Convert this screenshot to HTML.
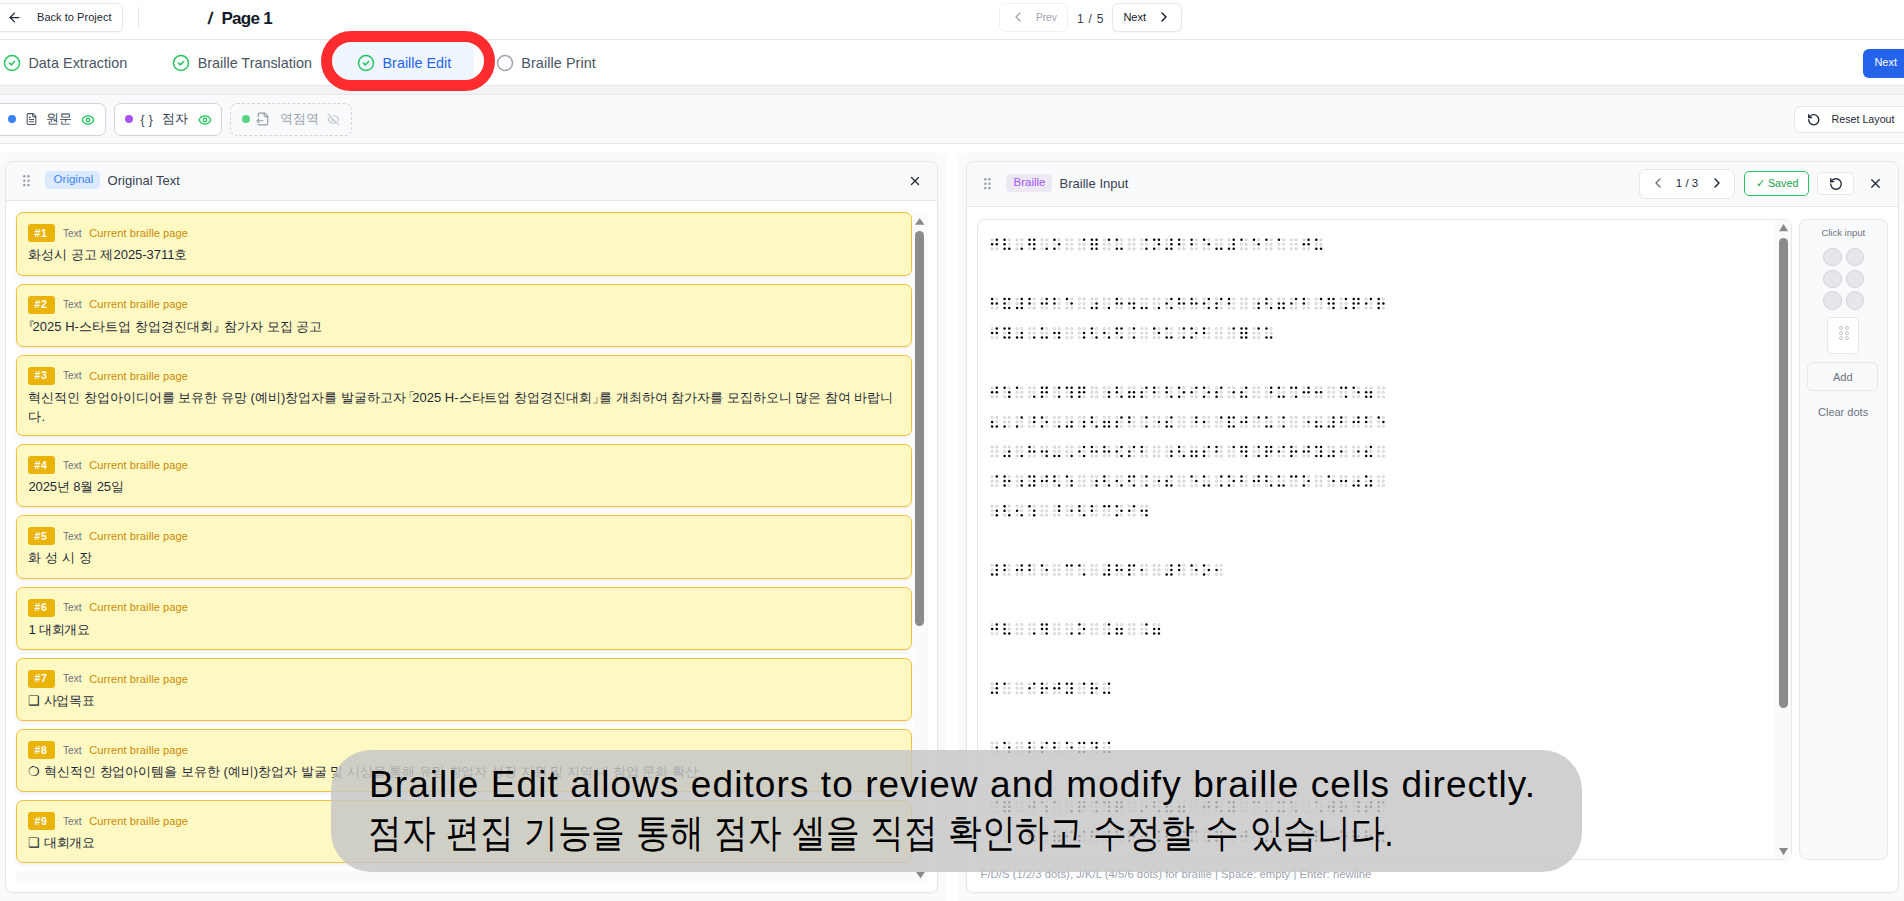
<!DOCTYPE html>
<html><head><meta charset="utf-8"><style>
html,body{margin:0;padding:0;width:1904px;height:901px;overflow:hidden;background:#fff;font-family:"Liberation Sans", sans-serif;}
.a{position:absolute;}
.t{position:absolute;white-space:nowrap;line-height:1;}
svg.a{overflow:visible}
</style></head><body>
<div class="a" style="left:0px;top:0px;width:1904px;height:39px;background:#fff"></div><div class="a" style="left:0px;top:39px;width:1904px;height:1px;background:#e5e7eb"></div><div class="a" style="left:-8px;top:3px;width:131px;height:29px;background:#fff;border:1px solid #e5e7eb;border-radius:6px;box-sizing:border-box;box-shadow:0 1px 2px rgba(0,0,0,0.05)"></div><svg class="a" style="left:6.8px;top:9.6px;" width="15" height="15" viewBox="0 0 24 24" fill="none" stroke-linecap="round" stroke-linejoin="round" stroke="#1f2937" stroke-width="2"><path d="m12 19-7-7 7-7"/><path d="M19 12H5"/></svg><div class="t" style="left:37px;top:11.79px;font-size:11px;color:#1f2937;font-weight:400;letter-spacing:0.041px;">Back to Project</div><div class="a" style="left:138px;top:7px;width:1px;height:21px;background:#e5e7eb"></div><div class="t" style="left:207.8px;top:10.21px;font-size:17px;color:#111827;font-weight:700;transform:skewX(-8deg)">/</div><div class="t" style="left:221.5px;top:10.21px;font-size:17px;color:#111827;font-weight:700;letter-spacing:-0.719px;">Page 1</div><div class="a" style="left:999px;top:3px;width:69px;height:29px;background:#fff;border:1px solid #e5e7eb;border-radius:6px;box-sizing:border-box;opacity:.55"></div><svg class="a" style="left:1010px;top:9.3px;" width="16" height="16" viewBox="0 0 24 24" fill="none" stroke-linecap="round" stroke-linejoin="round" stroke="#9ca3af" stroke-width="1.9"><path d="m15 18-6-6 6-6"/></svg><div class="t" style="left:1036px;top:12.97px;font-size:10.2px;color:#9ca3af;font-weight:400;letter-spacing:-0.063px;">Prev</div><div class="t" style="left:1077px;top:13.24px;font-size:12px;color:#374151;font-weight:400;word-spacing:1.5px">1 / 5</div><div class="a" style="left:1112px;top:3px;width:70px;height:29px;background:#fff;border:1px solid #e5e7eb;border-radius:6px;box-sizing:border-box;box-shadow:0 1px 2px rgba(0,0,0,0.05)"></div><div class="t" style="left:1123.4px;top:11.69px;font-size:11px;color:#111827;font-weight:400;">Next</div><svg class="a" style="left:1156.3px;top:9.3px;" width="16" height="16" viewBox="0 0 24 24" fill="none" stroke-linecap="round" stroke-linejoin="round" stroke="#111827" stroke-width="2.1"><path d="m9 18 6-6-6-6"/></svg><div class="a" style="left:0px;top:40px;width:1904px;height:45px;background:#fff"></div><div class="a" style="left:0px;top:85px;width:1904px;height:1px;background:#e5e7eb"></div><div class="a" style="left:0px;top:86px;width:1904px;height:8px;background:#f3f4f6"></div><div class="a" style="left:0px;top:94px;width:1904px;height:1px;background:#e5e7eb"></div><div class="a" style="left:331px;top:41px;width:143px;height:44px;background:#eff6ff"></div><svg class="a" style="left:3.45px;top:53.6px;" width="18" height="18" viewBox="0 0 24 24" fill="none" stroke-linecap="round" stroke-linejoin="round" stroke="#22c55e" stroke-width="2"><circle cx="12" cy="12" r="10"/><path d="m8.5 12 2.5 2.5 4.5-4.5"/></svg><div class="t" style="left:28.4px;top:56.41px;font-size:14.4px;color:#4b5563;font-weight:400;letter-spacing:0.041px;">Data Extraction</div><svg class="a" style="left:172.45px;top:53.6px;" width="18" height="18" viewBox="0 0 24 24" fill="none" stroke-linecap="round" stroke-linejoin="round" stroke="#22c55e" stroke-width="2"><circle cx="12" cy="12" r="10"/><path d="m8.5 12 2.5 2.5 4.5-4.5"/></svg><div class="t" style="left:197.7px;top:56.41px;font-size:14.4px;color:#4b5563;font-weight:400;letter-spacing:-0.005px;">Braille Translation</div><svg class="a" style="left:357.05px;top:53.6px;" width="18" height="18" viewBox="0 0 24 24" fill="none" stroke-linecap="round" stroke-linejoin="round" stroke="#22c55e" stroke-width="2"><circle cx="12" cy="12" r="10"/><path d="m8.5 12 2.5 2.5 4.5-4.5"/></svg><div class="t" style="left:382.5px;top:56.41px;font-size:14.4px;color:#2563eb;font-weight:400;letter-spacing:0.000px;">Braille Edit</div><svg class="a" style="left:496.05px;top:53.6px;" width="18" height="18" viewBox="0 0 24 24" fill="none" stroke-linecap="round" stroke-linejoin="round" stroke="#9ca3af" stroke-width="2"><circle cx="12" cy="12" r="10"/></svg><div class="t" style="left:521.3px;top:56.41px;font-size:14.4px;color:#4b5563;font-weight:400;letter-spacing:0.079px;">Braille Print</div><div class="a" style="left:321px;top:30.8px;width:174px;height:60.400000000000006px;border:11px solid #fe2c2f;border-radius:31px;box-sizing:border-box"></div><div class="a" style="left:1863px;top:48.7px;width:49px;height:29.099999999999994px;background:#2563eb;border-radius:6px"></div><div class="t" style="left:1874.4px;top:57.39px;font-size:11px;color:#fff;font-weight:400;">Next</div><div class="a" style="left:0px;top:95px;width:1904px;height:48px;background:#f9fafb"></div><div class="a" style="left:0px;top:143px;width:1904px;height:1px;background:#e5e7eb"></div><div class="a" style="left:-8px;top:102.5px;width:114px;height:33.5px;background:#fff;border:1px solid #d1d5db;border-radius:7px;box-sizing:border-box"></div><div class="a" style="left:8px;top:115px;width:8px;height:8px;border-radius:50%;background:#3b82f6"></div><svg class="a" style="left:24.5px;top:112px;" width="13" height="14" viewBox="0 0 24 24" fill="none" stroke-linecap="round" stroke-linejoin="round" stroke="#4b5563" stroke-width="2"><path d="M15 2H6a2 2 0 0 0-2 2v16a2 2 0 0 0 2 2h12a2 2 0 0 0 2-2V7Z"/><path d="M14 2v4a2 2 0 0 0 2 2h4"/><path d="M16 13H8"/><path d="M16 17H8"/><path d="M10 9H8"/></svg><div class="t" style="left:45.8px;top:113.42px;font-size:12.5px;color:#374151;font-weight:400;">원문</div><svg class="a" style="left:81px;top:112.5px;" width="14" height="14" viewBox="0 0 24 24" fill="none" stroke-linecap="round" stroke-linejoin="round" stroke="#22c55e" stroke-width="2.2"><path d="M2 12s3-7 10-7 10 7 10 7-3 7-10 7-10-7-10-7Z"/><circle cx="12" cy="12" r="3"/></svg><div class="a" style="left:114.3px;top:102.5px;width:108.10000000000001px;height:33.5px;background:#fff;border:1px solid #d1d5db;border-radius:7px;box-sizing:border-box"></div><div class="a" style="left:125px;top:115px;width:8px;height:8px;border-radius:50%;background:#a855f7"></div><div class="t" style="left:140.5px;top:113.84px;font-size:12px;color:#374151;font-weight:400;word-spacing:1px">{ }</div><div class="t" style="left:162.4px;top:113.42px;font-size:12.5px;color:#374151;font-weight:400;">점자</div><svg class="a" style="left:197.5px;top:112.5px;" width="14" height="14" viewBox="0 0 24 24" fill="none" stroke-linecap="round" stroke-linejoin="round" stroke="#22c55e" stroke-width="2.2"><path d="M2 12s3-7 10-7 10 7 10 7-3 7-10 7-10-7-10-7Z"/><circle cx="12" cy="12" r="3"/></svg><div class="a" style="left:230.4px;top:102.5px;width:121.6px;height:33.5px;border:1px dashed #d1d5db;border-radius:7px;box-sizing:border-box"></div><div class="a" style="left:242px;top:115px;width:8px;height:8px;border-radius:50%;background:#22c55e;opacity:.75"></div><svg class="a" style="left:256px;top:112px;opacity:.7" width="14" height="14" viewBox="0 0 24 24" fill="none" stroke-linecap="round" stroke-linejoin="round" stroke="#6b7280" stroke-width="2"><path d="M4 22h14a2 2 0 0 0 2-2V7l-5-5H6a2 2 0 0 0-2 2v4"/><path d="M14 2v4a2 2 0 0 0 2 2h4"/><path d="M2 15h10"/><path d="m5 12-3 3 3 3"/></svg><div class="t" style="left:279.6px;top:113.42px;font-size:12.5px;color:#9ca3af;font-weight:400;">역점역</div><svg class="a" style="left:327px;top:112.5px;opacity:.6" width="13" height="13" viewBox="0 0 24 24" fill="none" stroke-linecap="round" stroke-linejoin="round" stroke="#9ca3af" stroke-width="2"><path d="M9.88 9.88a3 3 0 1 0 4.24 4.24"/><path d="M10.73 5.08A10.43 10.43 0 0 1 12 5c7 0 10 7 10 7a13.16 13.16 0 0 1-1.67 2.68"/><path d="M6.61 6.61A13.53 13.53 0 0 0 2 12s3 7 10 7a9.74 9.74 0 0 0 5.39-1.61"/><path d="m2 2 20 20"/></svg><div class="a" style="left:1794.4px;top:105.6px;width:117.59999999999991px;height:27.200000000000017px;background:#fff;border:1px solid #e5e7eb;border-radius:6px;box-sizing:border-box"></div><svg class="a" style="left:1806.5px;top:112.5px;" width="13.5" height="13.5" viewBox="0 0 24 24" fill="none" stroke-linecap="round" stroke-linejoin="round" stroke="#1f2937" stroke-width="2.4"><path d="M3 12a9 9 0 1 0 9-9 9.75 9.75 0 0 0-6.74 2.74L3 8"/><path d="M3 3v5h5"/></svg><div class="t" style="left:1831.5px;top:114.24px;font-size:10.7px;color:#1f2937;font-weight:400;letter-spacing:0.001px;">Reset Layout</div><div class="a" style="left:0px;top:144px;width:1904px;height:757px;background:#fff"></div><div class="a" style="left:-4px;top:152px;width:950.5px;height:753px;background:#fafafa;border-radius:10px"></div><div class="a" style="left:957px;top:152px;width:953px;height:753px;background:#fafafa;border-radius:10px"></div><div class="a" style="left:4.7px;top:160.5px;width:933.8px;height:732.7px;background:#fff;border:1px solid #e5e7eb;border-radius:8px;box-sizing:border-box;box-shadow:0 1px 2px rgba(0,0,0,0.04)"></div><div class="a" style="left:5.7px;top:161.5px;width:931.8px;height:39.0px;background:#f9fafb;border-radius:7px 7px 0 0"></div><div class="a" style="left:5.7px;top:200px;width:931.8px;height:1px;background:#e5e7eb"></div><svg class="a" style="left:23.3px;top:174.5px" width="8" height="12" fill="#9ca3af"><circle cx="1.3" cy="1.3" r="1.3"/><circle cx="5.5" cy="1.3" r="1.3"/><circle cx="1.3" cy="5.7" r="1.3"/><circle cx="5.5" cy="5.7" r="1.3"/><circle cx="1.3" cy="10.100000000000001" r="1.3"/><circle cx="5.5" cy="10.100000000000001" r="1.3"/></svg><div class="a" style="left:45.2px;top:171px;width:55.099999999999994px;height:18px;background:#dbeafe;border-radius:4px"></div><div class="t" style="left:53.6px;top:174.27px;font-size:11.5px;color:#3b82f6;font-weight:400;letter-spacing:0.007px;">Original</div><div class="t" style="left:107.5px;top:173.70px;font-size:13px;color:#374151;font-weight:400;letter-spacing:0.037px;">Original Text</div><svg class="a" style="left:907.5px;top:173.5px;" width="14" height="14" viewBox="0 0 24 24" fill="none" stroke-linecap="round" stroke-linejoin="round" stroke="#1f2937" stroke-width="2.2"><path d="M18 6 6 18"/><path d="m6 6 12 12"/></svg><div class="a" style="left:15.5px;top:212.4px;width:896.9px;height:63.20000000000002px;background:#fef9c3;border:1.5px solid #f2c23f;border-radius:7px;box-sizing:border-box;box-shadow:0 2px 4px rgba(0,0,0,0.07)"></div><div class="a" style="left:27.8px;top:224.4px;width:26.999999999999996px;height:18.0px;background:#eab308;border-radius:3px"></div><div class="t" style="left:34.5px;top:227.91px;font-size:10.5px;color:#fff;font-weight:700;letter-spacing:0.556px;">#1</div><div class="t" style="left:63px;top:228.97px;font-size:10.2px;color:#6b7280;font-weight:400;">Text</div><div class="t" style="left:89.3px;top:228.20px;font-size:11.1px;color:#ca8a04;font-weight:400;letter-spacing:0.063px;">Current braille page</div><div class="t" style="left:28.4px;top:248.40px;font-size:13px;color:#1f2937;font-weight:400;letter-spacing:-0.019px;">화성시 공고 제2025-3711호</div><div class="a" style="left:15.5px;top:283.6px;width:896.9px;height:63.19999999999999px;background:#fef9c3;border:1.5px solid #f2c23f;border-radius:7px;box-sizing:border-box;box-shadow:0 2px 4px rgba(0,0,0,0.07)"></div><div class="a" style="left:27.8px;top:295.6px;width:26.999999999999996px;height:18.0px;background:#eab308;border-radius:3px"></div><div class="t" style="left:34.5px;top:299.11px;font-size:10.5px;color:#fff;font-weight:700;letter-spacing:0.556px;">#2</div><div class="t" style="left:63px;top:300.17px;font-size:10.2px;color:#6b7280;font-weight:400;">Text</div><div class="t" style="left:89.3px;top:299.40px;font-size:11.1px;color:#ca8a04;font-weight:400;letter-spacing:0.063px;">Current braille page</div><div class="t" style="left:28.4px;top:319.60px;font-size:13px;color:#1f2937;font-weight:400;letter-spacing:0.043px;"><span style="margin-left:-6px;margin-right:-3px">『</span>2025 H-스타트업 창업경진대회<span style="margin-right:-6px">』</span> 참가자 모집 공고</div><div class="a" style="left:15.5px;top:354.8px;width:896.9px;height:81.19999999999999px;background:#fef9c3;border:1.5px solid #f2c23f;border-radius:7px;box-sizing:border-box;box-shadow:0 2px 4px rgba(0,0,0,0.07)"></div><div class="a" style="left:27.8px;top:366.8px;width:26.999999999999996px;height:18.0px;background:#eab308;border-radius:3px"></div><div class="t" style="left:34.5px;top:370.31px;font-size:10.5px;color:#fff;font-weight:700;letter-spacing:0.556px;">#3</div><div class="t" style="left:63px;top:371.37px;font-size:10.2px;color:#6b7280;font-weight:400;">Text</div><div class="t" style="left:89.3px;top:370.60px;font-size:11.1px;color:#ca8a04;font-weight:400;letter-spacing:0.063px;">Current braille page</div><div class="t" style="left:28.4px;top:390.80px;font-size:13px;color:#1f2937;font-weight:400;letter-spacing:-0.011px;">혁신적인 창업아이디어를 보유한 유망 (예비)창업자를 발굴하고자 <span style="margin-left:-7px;margin-right:-3px">「</span>2025 H-스타트업 창업경진대회<span style="margin-right:-6px">」</span>를 개최하여 참가자를 모집하오니 많은 참여 바랍니</div><div class="t" style="left:28.4px;top:410.30px;font-size:13px;color:#1f2937;font-weight:400;">다.</div><div class="a" style="left:15.5px;top:444.2px;width:896.9px;height:63.19999999999999px;background:#fef9c3;border:1.5px solid #f2c23f;border-radius:7px;box-sizing:border-box;box-shadow:0 2px 4px rgba(0,0,0,0.07)"></div><div class="a" style="left:27.8px;top:456.2px;width:26.999999999999996px;height:18.0px;background:#eab308;border-radius:3px"></div><div class="t" style="left:34.5px;top:459.71px;font-size:10.5px;color:#fff;font-weight:700;letter-spacing:0.556px;">#4</div><div class="t" style="left:63px;top:460.77px;font-size:10.2px;color:#6b7280;font-weight:400;">Text</div><div class="t" style="left:89.3px;top:460.00px;font-size:11.1px;color:#ca8a04;font-weight:400;letter-spacing:0.063px;">Current braille page</div><div class="t" style="left:28.4px;top:480.20px;font-size:13px;color:#1f2937;font-weight:400;letter-spacing:-0.112px;">2025년 8월 25일</div><div class="a" style="left:15.5px;top:515.4px;width:896.9px;height:63.200000000000045px;background:#fef9c3;border:1.5px solid #f2c23f;border-radius:7px;box-sizing:border-box;box-shadow:0 2px 4px rgba(0,0,0,0.07)"></div><div class="a" style="left:27.8px;top:527.4px;width:26.999999999999996px;height:18.0px;background:#eab308;border-radius:3px"></div><div class="t" style="left:34.5px;top:530.91px;font-size:10.5px;color:#fff;font-weight:700;letter-spacing:0.556px;">#5</div><div class="t" style="left:63px;top:531.97px;font-size:10.2px;color:#6b7280;font-weight:400;">Text</div><div class="t" style="left:89.3px;top:531.20px;font-size:11.1px;color:#ca8a04;font-weight:400;letter-spacing:0.063px;">Current braille page</div><div class="t" style="left:28.4px;top:551.40px;font-size:13px;color:#1f2937;font-weight:400;letter-spacing:0.151px;">화 성 시 장</div><div class="a" style="left:15.5px;top:586.6px;width:896.9px;height:63.200000000000045px;background:#fef9c3;border:1.5px solid #f2c23f;border-radius:7px;box-sizing:border-box;box-shadow:0 2px 4px rgba(0,0,0,0.07)"></div><div class="a" style="left:27.8px;top:598.6px;width:26.999999999999996px;height:18.0px;background:#eab308;border-radius:3px"></div><div class="t" style="left:34.5px;top:602.11px;font-size:10.5px;color:#fff;font-weight:700;letter-spacing:0.556px;">#6</div><div class="t" style="left:63px;top:603.17px;font-size:10.2px;color:#6b7280;font-weight:400;">Text</div><div class="t" style="left:89.3px;top:602.40px;font-size:11.1px;color:#ca8a04;font-weight:400;letter-spacing:0.063px;">Current braille page</div><div class="t" style="left:28.4px;top:622.60px;font-size:13px;color:#1f2937;font-weight:400;letter-spacing:-0.207px;">1 대회개요</div><div class="a" style="left:15.5px;top:657.8px;width:896.9px;height:63.200000000000045px;background:#fef9c3;border:1.5px solid #f2c23f;border-radius:7px;box-sizing:border-box;box-shadow:0 2px 4px rgba(0,0,0,0.07)"></div><div class="a" style="left:27.8px;top:669.8px;width:26.999999999999996px;height:18.0px;background:#eab308;border-radius:3px"></div><div class="t" style="left:34.5px;top:673.31px;font-size:10.5px;color:#fff;font-weight:700;letter-spacing:0.556px;">#7</div><div class="t" style="left:63px;top:674.37px;font-size:10.2px;color:#6b7280;font-weight:400;">Text</div><div class="t" style="left:89.3px;top:673.60px;font-size:11.1px;color:#ca8a04;font-weight:400;letter-spacing:0.063px;">Current braille page</div><div class="t" style="left:28.4px;top:693.80px;font-size:13px;color:#1f2937;font-weight:400;letter-spacing:-0.171px;">❑ 사업목표</div><div class="a" style="left:15.5px;top:729.0px;width:896.9px;height:63.200000000000045px;background:#fef9c3;border:1.5px solid #f2c23f;border-radius:7px;box-sizing:border-box;box-shadow:0 2px 4px rgba(0,0,0,0.07)"></div><div class="a" style="left:27.8px;top:741.0px;width:26.999999999999996px;height:18.0px;background:#eab308;border-radius:3px"></div><div class="t" style="left:34.5px;top:744.51px;font-size:10.5px;color:#fff;font-weight:700;letter-spacing:0.556px;">#8</div><div class="t" style="left:63px;top:745.57px;font-size:10.2px;color:#6b7280;font-weight:400;">Text</div><div class="t" style="left:89.3px;top:744.80px;font-size:11.1px;color:#ca8a04;font-weight:400;letter-spacing:0.063px;">Current braille page</div><div class="t" style="left:28.4px;top:765.00px;font-size:13px;color:#1f2937;font-weight:400;letter-spacing:-0.016px;">❍ 혁신적인 창업아이템을 보유한 (예비)창업자 발굴 및 시상을 통해 유망 창업자 성장 지원 및 지역 내 창업 문화 확산</div><div class="a" style="left:15.5px;top:800.2px;width:896.9px;height:63.200000000000045px;background:#fef9c3;border:1.5px solid #f2c23f;border-radius:7px;box-sizing:border-box;box-shadow:0 2px 4px rgba(0,0,0,0.07)"></div><div class="a" style="left:27.8px;top:812.2px;width:26.999999999999996px;height:18.0px;background:#eab308;border-radius:3px"></div><div class="t" style="left:34.5px;top:815.71px;font-size:10.5px;color:#fff;font-weight:700;letter-spacing:0.556px;">#9</div><div class="t" style="left:63px;top:816.77px;font-size:10.2px;color:#6b7280;font-weight:400;">Text</div><div class="t" style="left:89.3px;top:816.00px;font-size:11.1px;color:#ca8a04;font-weight:400;letter-spacing:0.063px;">Current braille page</div><div class="t" style="left:28.4px;top:836.20px;font-size:13px;color:#1f2937;font-weight:400;letter-spacing:-0.138px;">❑ 대회개요</div><div class="a" style="left:15.5px;top:871px;width:911.5px;height:12px;background:#f9fafb"></div><div class="a" style="left:913px;top:212px;width:15px;height:671px;background:#fafafa"></div><svg class="a" style="left:915.3px;top:217.5px;fill:#8a8a8a" width="9.4" height="6.7" viewBox="0 0 9.4 6.7" fill="none" stroke-linecap="round" stroke-linejoin="round" stroke="none" stroke-width="2"><path d="M4.7 0 9.4 6.7H0Z"/></svg><div class="a" style="left:915.4px;top:230.5px;width:9.0px;height:395.29999999999995px;background:#8a8b8a;border-radius:5px"></div><svg class="a" style="left:915.6px;top:872.2px;fill:#8a8a8a" width="9" height="6.3" viewBox="0 0 9 6.3" fill="none" stroke-linecap="round" stroke-linejoin="round" stroke="none" stroke-width="2"><path d="M0 0H9L4.5 6.3Z"/></svg><div class="a" style="left:965.5px;top:160.5px;width:933.0px;height:732.7px;background:#fff;border:1px solid #e5e7eb;border-radius:8px;box-sizing:border-box;box-shadow:0 1px 2px rgba(0,0,0,0.04)"></div><div class="a" style="left:966.5px;top:161.5px;width:931.0px;height:45.0px;background:#f9fafb;border-radius:7px 7px 0 0"></div><div class="a" style="left:966.5px;top:206px;width:931.0px;height:1px;background:#e5e7eb"></div><svg class="a" style="left:983.8px;top:177.5px" width="8" height="12" fill="#9ca3af"><circle cx="1.3" cy="1.3" r="1.3"/><circle cx="5.5" cy="1.3" r="1.3"/><circle cx="1.3" cy="5.7" r="1.3"/><circle cx="5.5" cy="5.7" r="1.3"/><circle cx="1.3" cy="10.100000000000001" r="1.3"/><circle cx="5.5" cy="10.100000000000001" r="1.3"/></svg><div class="a" style="left:1006px;top:174.4px;width:45.700000000000045px;height:17.599999999999994px;background:#ece9f3;border-radius:4px"></div><div class="t" style="left:1013.5px;top:177.27px;font-size:11.5px;color:#a855f7;font-weight:400;">Braille</div><div class="t" style="left:1059.5px;top:176.80px;font-size:13px;color:#374151;font-weight:400;letter-spacing:0.019px;">Braille Input</div><div class="a" style="left:1639px;top:168.6px;width:96px;height:30.0px;background:#fff;border:1px solid #e5e7eb;border-radius:7px;box-sizing:border-box"></div><svg class="a" style="left:1650px;top:175.3px;" width="16" height="16" viewBox="0 0 24 24" fill="none" stroke-linecap="round" stroke-linejoin="round" stroke="#6b7280" stroke-width="2"><path d="m15 18-6-6 6-6"/></svg><div class="t" style="left:1675.8px;top:177.77px;font-size:11.5px;color:#1f2937;font-weight:400;">1 / 3</div><svg class="a" style="left:1709px;top:175.3px;" width="16" height="16" viewBox="0 0 24 24" fill="none" stroke-linecap="round" stroke-linejoin="round" stroke="#1f2937" stroke-width="2.2"><path d="m9 18 6-6-6-6"/></svg><div class="a" style="left:1744.4px;top:171.2px;width:64.29999999999995px;height:24.5px;background:#fff;border:1.5px solid #22c55e;border-radius:5px;box-sizing:border-box"></div><div class="t" style="left:1755.9px;top:178.16px;font-size:10.8px;color:#16a34a;font-weight:400;">✓ Saved</div><div class="a" style="left:1816.6px;top:171.5px;width:37.40000000000009px;height:23.80000000000001px;background:#fff;border:1px solid #e5e7eb;border-radius:5px;box-sizing:border-box"></div><svg class="a" style="left:1828.5px;top:176.5px;" width="14" height="14" viewBox="0 0 24 24" fill="none" stroke-linecap="round" stroke-linejoin="round" stroke="#1f2937" stroke-width="2.3"><path d="M3 12a9 9 0 1 0 9-9 9.75 9.75 0 0 0-6.74 2.74L3 8"/><path d="M3 3v5h5"/></svg><svg class="a" style="left:1867.5px;top:175.5px;" width="15" height="15" viewBox="0 0 24 24" fill="none" stroke-linecap="round" stroke-linejoin="round" stroke="#1f2937" stroke-width="2.2"><path d="M18 6 6 18"/><path d="m6 6 12 12"/></svg><div class="a" style="left:976.7px;top:218.5px;width:815.3px;height:641.5px;background:#fff;border:1px solid #e5e7eb;border-radius:8px;box-sizing:border-box"></div><div class="a" style="left:1775.3px;top:219.5px;width:15.700000000000045px;height:639.5px;background:#fafafa"></div><svg class="a" style="left:1778.9px;top:224.2px;fill:#8a8a8a" width="9.1" height="7.2" viewBox="0 0 9.1 7.2" fill="none" stroke-linecap="round" stroke-linejoin="round" stroke="none" stroke-width="2"><path d="M4.55 0 9.1 7.2H0Z"/></svg><div class="a" style="left:1778.9px;top:237.8px;width:9.0px;height:470.7px;background:#8a8b8a;border-radius:5px"></div><svg class="a" style="left:1778.9px;top:848.3px;fill:#8a8a8a" width="9.1" height="7.2" viewBox="0 0 9.1 7.2" fill="none" stroke-linecap="round" stroke-linejoin="round" stroke="none" stroke-width="2"><path d="M0 0H9.1L4.55 7.2Z"/></svg><svg class="a" style="left:976.7px;top:218.5px" width="800" height="640"><defs><symbol id="b0" viewBox="0 0 8 12" width="8" height="12" overflow="visible"><circle cx="1.1" cy="1.1" r="1.05" fill="none" stroke="#b6bac1" stroke-width="0.75"/><circle cx="1.1" cy="5.6" r="1.05" fill="none" stroke="#b6bac1" stroke-width="0.75"/><circle cx="1.1" cy="10.1" r="1.05" fill="none" stroke="#b6bac1" stroke-width="0.75"/><circle cx="5.800000000000001" cy="1.1" r="1.05" fill="none" stroke="#b6bac1" stroke-width="0.75"/><circle cx="5.800000000000001" cy="5.6" r="1.05" fill="none" stroke="#b6bac1" stroke-width="0.75"/><circle cx="5.800000000000001" cy="10.1" r="1.05" fill="none" stroke="#b6bac1" stroke-width="0.75"/></symbol><symbol id="b1" viewBox="0 0 8 12" width="8" height="12" overflow="visible"><circle cx="1.1" cy="1.1" r="1.25" fill="#000"/><circle cx="1.1" cy="5.6" r="1.05" fill="none" stroke="#b6bac1" stroke-width="0.75"/><circle cx="1.1" cy="10.1" r="1.05" fill="none" stroke="#b6bac1" stroke-width="0.75"/><circle cx="5.800000000000001" cy="1.1" r="1.05" fill="none" stroke="#b6bac1" stroke-width="0.75"/><circle cx="5.800000000000001" cy="5.6" r="1.05" fill="none" stroke="#b6bac1" stroke-width="0.75"/><circle cx="5.800000000000001" cy="10.1" r="1.05" fill="none" stroke="#b6bac1" stroke-width="0.75"/></symbol><symbol id="b2" viewBox="0 0 8 12" width="8" height="12" overflow="visible"><circle cx="1.1" cy="1.1" r="1.05" fill="none" stroke="#b6bac1" stroke-width="0.75"/><circle cx="1.1" cy="5.6" r="1.25" fill="#000"/><circle cx="1.1" cy="10.1" r="1.05" fill="none" stroke="#b6bac1" stroke-width="0.75"/><circle cx="5.800000000000001" cy="1.1" r="1.05" fill="none" stroke="#b6bac1" stroke-width="0.75"/><circle cx="5.800000000000001" cy="5.6" r="1.05" fill="none" stroke="#b6bac1" stroke-width="0.75"/><circle cx="5.800000000000001" cy="10.1" r="1.05" fill="none" stroke="#b6bac1" stroke-width="0.75"/></symbol><symbol id="b3" viewBox="0 0 8 12" width="8" height="12" overflow="visible"><circle cx="1.1" cy="1.1" r="1.25" fill="#000"/><circle cx="1.1" cy="5.6" r="1.25" fill="#000"/><circle cx="1.1" cy="10.1" r="1.05" fill="none" stroke="#b6bac1" stroke-width="0.75"/><circle cx="5.800000000000001" cy="1.1" r="1.05" fill="none" stroke="#b6bac1" stroke-width="0.75"/><circle cx="5.800000000000001" cy="5.6" r="1.05" fill="none" stroke="#b6bac1" stroke-width="0.75"/><circle cx="5.800000000000001" cy="10.1" r="1.05" fill="none" stroke="#b6bac1" stroke-width="0.75"/></symbol><symbol id="b4" viewBox="0 0 8 12" width="8" height="12" overflow="visible"><circle cx="1.1" cy="1.1" r="1.05" fill="none" stroke="#b6bac1" stroke-width="0.75"/><circle cx="1.1" cy="5.6" r="1.05" fill="none" stroke="#b6bac1" stroke-width="0.75"/><circle cx="1.1" cy="10.1" r="1.25" fill="#000"/><circle cx="5.800000000000001" cy="1.1" r="1.05" fill="none" stroke="#b6bac1" stroke-width="0.75"/><circle cx="5.800000000000001" cy="5.6" r="1.05" fill="none" stroke="#b6bac1" stroke-width="0.75"/><circle cx="5.800000000000001" cy="10.1" r="1.05" fill="none" stroke="#b6bac1" stroke-width="0.75"/></symbol><symbol id="b5" viewBox="0 0 8 12" width="8" height="12" overflow="visible"><circle cx="1.1" cy="1.1" r="1.25" fill="#000"/><circle cx="1.1" cy="5.6" r="1.05" fill="none" stroke="#b6bac1" stroke-width="0.75"/><circle cx="1.1" cy="10.1" r="1.25" fill="#000"/><circle cx="5.800000000000001" cy="1.1" r="1.05" fill="none" stroke="#b6bac1" stroke-width="0.75"/><circle cx="5.800000000000001" cy="5.6" r="1.05" fill="none" stroke="#b6bac1" stroke-width="0.75"/><circle cx="5.800000000000001" cy="10.1" r="1.05" fill="none" stroke="#b6bac1" stroke-width="0.75"/></symbol><symbol id="b6" viewBox="0 0 8 12" width="8" height="12" overflow="visible"><circle cx="1.1" cy="1.1" r="1.05" fill="none" stroke="#b6bac1" stroke-width="0.75"/><circle cx="1.1" cy="5.6" r="1.25" fill="#000"/><circle cx="1.1" cy="10.1" r="1.25" fill="#000"/><circle cx="5.800000000000001" cy="1.1" r="1.05" fill="none" stroke="#b6bac1" stroke-width="0.75"/><circle cx="5.800000000000001" cy="5.6" r="1.05" fill="none" stroke="#b6bac1" stroke-width="0.75"/><circle cx="5.800000000000001" cy="10.1" r="1.05" fill="none" stroke="#b6bac1" stroke-width="0.75"/></symbol><symbol id="b7" viewBox="0 0 8 12" width="8" height="12" overflow="visible"><circle cx="1.1" cy="1.1" r="1.25" fill="#000"/><circle cx="1.1" cy="5.6" r="1.25" fill="#000"/><circle cx="1.1" cy="10.1" r="1.25" fill="#000"/><circle cx="5.800000000000001" cy="1.1" r="1.05" fill="none" stroke="#b6bac1" stroke-width="0.75"/><circle cx="5.800000000000001" cy="5.6" r="1.05" fill="none" stroke="#b6bac1" stroke-width="0.75"/><circle cx="5.800000000000001" cy="10.1" r="1.05" fill="none" stroke="#b6bac1" stroke-width="0.75"/></symbol><symbol id="b8" viewBox="0 0 8 12" width="8" height="12" overflow="visible"><circle cx="1.1" cy="1.1" r="1.05" fill="none" stroke="#b6bac1" stroke-width="0.75"/><circle cx="1.1" cy="5.6" r="1.05" fill="none" stroke="#b6bac1" stroke-width="0.75"/><circle cx="1.1" cy="10.1" r="1.05" fill="none" stroke="#b6bac1" stroke-width="0.75"/><circle cx="5.800000000000001" cy="1.1" r="1.25" fill="#000"/><circle cx="5.800000000000001" cy="5.6" r="1.05" fill="none" stroke="#b6bac1" stroke-width="0.75"/><circle cx="5.800000000000001" cy="10.1" r="1.05" fill="none" stroke="#b6bac1" stroke-width="0.75"/></symbol><symbol id="b9" viewBox="0 0 8 12" width="8" height="12" overflow="visible"><circle cx="1.1" cy="1.1" r="1.25" fill="#000"/><circle cx="1.1" cy="5.6" r="1.05" fill="none" stroke="#b6bac1" stroke-width="0.75"/><circle cx="1.1" cy="10.1" r="1.05" fill="none" stroke="#b6bac1" stroke-width="0.75"/><circle cx="5.800000000000001" cy="1.1" r="1.25" fill="#000"/><circle cx="5.800000000000001" cy="5.6" r="1.05" fill="none" stroke="#b6bac1" stroke-width="0.75"/><circle cx="5.800000000000001" cy="10.1" r="1.05" fill="none" stroke="#b6bac1" stroke-width="0.75"/></symbol><symbol id="b10" viewBox="0 0 8 12" width="8" height="12" overflow="visible"><circle cx="1.1" cy="1.1" r="1.05" fill="none" stroke="#b6bac1" stroke-width="0.75"/><circle cx="1.1" cy="5.6" r="1.25" fill="#000"/><circle cx="1.1" cy="10.1" r="1.05" fill="none" stroke="#b6bac1" stroke-width="0.75"/><circle cx="5.800000000000001" cy="1.1" r="1.25" fill="#000"/><circle cx="5.800000000000001" cy="5.6" r="1.05" fill="none" stroke="#b6bac1" stroke-width="0.75"/><circle cx="5.800000000000001" cy="10.1" r="1.05" fill="none" stroke="#b6bac1" stroke-width="0.75"/></symbol><symbol id="b11" viewBox="0 0 8 12" width="8" height="12" overflow="visible"><circle cx="1.1" cy="1.1" r="1.25" fill="#000"/><circle cx="1.1" cy="5.6" r="1.25" fill="#000"/><circle cx="1.1" cy="10.1" r="1.05" fill="none" stroke="#b6bac1" stroke-width="0.75"/><circle cx="5.800000000000001" cy="1.1" r="1.25" fill="#000"/><circle cx="5.800000000000001" cy="5.6" r="1.05" fill="none" stroke="#b6bac1" stroke-width="0.75"/><circle cx="5.800000000000001" cy="10.1" r="1.05" fill="none" stroke="#b6bac1" stroke-width="0.75"/></symbol><symbol id="b12" viewBox="0 0 8 12" width="8" height="12" overflow="visible"><circle cx="1.1" cy="1.1" r="1.05" fill="none" stroke="#b6bac1" stroke-width="0.75"/><circle cx="1.1" cy="5.6" r="1.05" fill="none" stroke="#b6bac1" stroke-width="0.75"/><circle cx="1.1" cy="10.1" r="1.25" fill="#000"/><circle cx="5.800000000000001" cy="1.1" r="1.25" fill="#000"/><circle cx="5.800000000000001" cy="5.6" r="1.05" fill="none" stroke="#b6bac1" stroke-width="0.75"/><circle cx="5.800000000000001" cy="10.1" r="1.05" fill="none" stroke="#b6bac1" stroke-width="0.75"/></symbol><symbol id="b13" viewBox="0 0 8 12" width="8" height="12" overflow="visible"><circle cx="1.1" cy="1.1" r="1.25" fill="#000"/><circle cx="1.1" cy="5.6" r="1.05" fill="none" stroke="#b6bac1" stroke-width="0.75"/><circle cx="1.1" cy="10.1" r="1.25" fill="#000"/><circle cx="5.800000000000001" cy="1.1" r="1.25" fill="#000"/><circle cx="5.800000000000001" cy="5.6" r="1.05" fill="none" stroke="#b6bac1" stroke-width="0.75"/><circle cx="5.800000000000001" cy="10.1" r="1.05" fill="none" stroke="#b6bac1" stroke-width="0.75"/></symbol><symbol id="b14" viewBox="0 0 8 12" width="8" height="12" overflow="visible"><circle cx="1.1" cy="1.1" r="1.05" fill="none" stroke="#b6bac1" stroke-width="0.75"/><circle cx="1.1" cy="5.6" r="1.25" fill="#000"/><circle cx="1.1" cy="10.1" r="1.25" fill="#000"/><circle cx="5.800000000000001" cy="1.1" r="1.25" fill="#000"/><circle cx="5.800000000000001" cy="5.6" r="1.05" fill="none" stroke="#b6bac1" stroke-width="0.75"/><circle cx="5.800000000000001" cy="10.1" r="1.05" fill="none" stroke="#b6bac1" stroke-width="0.75"/></symbol><symbol id="b15" viewBox="0 0 8 12" width="8" height="12" overflow="visible"><circle cx="1.1" cy="1.1" r="1.25" fill="#000"/><circle cx="1.1" cy="5.6" r="1.25" fill="#000"/><circle cx="1.1" cy="10.1" r="1.25" fill="#000"/><circle cx="5.800000000000001" cy="1.1" r="1.25" fill="#000"/><circle cx="5.800000000000001" cy="5.6" r="1.05" fill="none" stroke="#b6bac1" stroke-width="0.75"/><circle cx="5.800000000000001" cy="10.1" r="1.05" fill="none" stroke="#b6bac1" stroke-width="0.75"/></symbol><symbol id="b16" viewBox="0 0 8 12" width="8" height="12" overflow="visible"><circle cx="1.1" cy="1.1" r="1.05" fill="none" stroke="#b6bac1" stroke-width="0.75"/><circle cx="1.1" cy="5.6" r="1.05" fill="none" stroke="#b6bac1" stroke-width="0.75"/><circle cx="1.1" cy="10.1" r="1.05" fill="none" stroke="#b6bac1" stroke-width="0.75"/><circle cx="5.800000000000001" cy="1.1" r="1.05" fill="none" stroke="#b6bac1" stroke-width="0.75"/><circle cx="5.800000000000001" cy="5.6" r="1.25" fill="#000"/><circle cx="5.800000000000001" cy="10.1" r="1.05" fill="none" stroke="#b6bac1" stroke-width="0.75"/></symbol><symbol id="b17" viewBox="0 0 8 12" width="8" height="12" overflow="visible"><circle cx="1.1" cy="1.1" r="1.25" fill="#000"/><circle cx="1.1" cy="5.6" r="1.05" fill="none" stroke="#b6bac1" stroke-width="0.75"/><circle cx="1.1" cy="10.1" r="1.05" fill="none" stroke="#b6bac1" stroke-width="0.75"/><circle cx="5.800000000000001" cy="1.1" r="1.05" fill="none" stroke="#b6bac1" stroke-width="0.75"/><circle cx="5.800000000000001" cy="5.6" r="1.25" fill="#000"/><circle cx="5.800000000000001" cy="10.1" r="1.05" fill="none" stroke="#b6bac1" stroke-width="0.75"/></symbol><symbol id="b18" viewBox="0 0 8 12" width="8" height="12" overflow="visible"><circle cx="1.1" cy="1.1" r="1.05" fill="none" stroke="#b6bac1" stroke-width="0.75"/><circle cx="1.1" cy="5.6" r="1.25" fill="#000"/><circle cx="1.1" cy="10.1" r="1.05" fill="none" stroke="#b6bac1" stroke-width="0.75"/><circle cx="5.800000000000001" cy="1.1" r="1.05" fill="none" stroke="#b6bac1" stroke-width="0.75"/><circle cx="5.800000000000001" cy="5.6" r="1.25" fill="#000"/><circle cx="5.800000000000001" cy="10.1" r="1.05" fill="none" stroke="#b6bac1" stroke-width="0.75"/></symbol><symbol id="b19" viewBox="0 0 8 12" width="8" height="12" overflow="visible"><circle cx="1.1" cy="1.1" r="1.25" fill="#000"/><circle cx="1.1" cy="5.6" r="1.25" fill="#000"/><circle cx="1.1" cy="10.1" r="1.05" fill="none" stroke="#b6bac1" stroke-width="0.75"/><circle cx="5.800000000000001" cy="1.1" r="1.05" fill="none" stroke="#b6bac1" stroke-width="0.75"/><circle cx="5.800000000000001" cy="5.6" r="1.25" fill="#000"/><circle cx="5.800000000000001" cy="10.1" r="1.05" fill="none" stroke="#b6bac1" stroke-width="0.75"/></symbol><symbol id="b20" viewBox="0 0 8 12" width="8" height="12" overflow="visible"><circle cx="1.1" cy="1.1" r="1.05" fill="none" stroke="#b6bac1" stroke-width="0.75"/><circle cx="1.1" cy="5.6" r="1.05" fill="none" stroke="#b6bac1" stroke-width="0.75"/><circle cx="1.1" cy="10.1" r="1.25" fill="#000"/><circle cx="5.800000000000001" cy="1.1" r="1.05" fill="none" stroke="#b6bac1" stroke-width="0.75"/><circle cx="5.800000000000001" cy="5.6" r="1.25" fill="#000"/><circle cx="5.800000000000001" cy="10.1" r="1.05" fill="none" stroke="#b6bac1" stroke-width="0.75"/></symbol><symbol id="b21" viewBox="0 0 8 12" width="8" height="12" overflow="visible"><circle cx="1.1" cy="1.1" r="1.25" fill="#000"/><circle cx="1.1" cy="5.6" r="1.05" fill="none" stroke="#b6bac1" stroke-width="0.75"/><circle cx="1.1" cy="10.1" r="1.25" fill="#000"/><circle cx="5.800000000000001" cy="1.1" r="1.05" fill="none" stroke="#b6bac1" stroke-width="0.75"/><circle cx="5.800000000000001" cy="5.6" r="1.25" fill="#000"/><circle cx="5.800000000000001" cy="10.1" r="1.05" fill="none" stroke="#b6bac1" stroke-width="0.75"/></symbol><symbol id="b22" viewBox="0 0 8 12" width="8" height="12" overflow="visible"><circle cx="1.1" cy="1.1" r="1.05" fill="none" stroke="#b6bac1" stroke-width="0.75"/><circle cx="1.1" cy="5.6" r="1.25" fill="#000"/><circle cx="1.1" cy="10.1" r="1.25" fill="#000"/><circle cx="5.800000000000001" cy="1.1" r="1.05" fill="none" stroke="#b6bac1" stroke-width="0.75"/><circle cx="5.800000000000001" cy="5.6" r="1.25" fill="#000"/><circle cx="5.800000000000001" cy="10.1" r="1.05" fill="none" stroke="#b6bac1" stroke-width="0.75"/></symbol><symbol id="b23" viewBox="0 0 8 12" width="8" height="12" overflow="visible"><circle cx="1.1" cy="1.1" r="1.25" fill="#000"/><circle cx="1.1" cy="5.6" r="1.25" fill="#000"/><circle cx="1.1" cy="10.1" r="1.25" fill="#000"/><circle cx="5.800000000000001" cy="1.1" r="1.05" fill="none" stroke="#b6bac1" stroke-width="0.75"/><circle cx="5.800000000000001" cy="5.6" r="1.25" fill="#000"/><circle cx="5.800000000000001" cy="10.1" r="1.05" fill="none" stroke="#b6bac1" stroke-width="0.75"/></symbol><symbol id="b24" viewBox="0 0 8 12" width="8" height="12" overflow="visible"><circle cx="1.1" cy="1.1" r="1.05" fill="none" stroke="#b6bac1" stroke-width="0.75"/><circle cx="1.1" cy="5.6" r="1.05" fill="none" stroke="#b6bac1" stroke-width="0.75"/><circle cx="1.1" cy="10.1" r="1.05" fill="none" stroke="#b6bac1" stroke-width="0.75"/><circle cx="5.800000000000001" cy="1.1" r="1.25" fill="#000"/><circle cx="5.800000000000001" cy="5.6" r="1.25" fill="#000"/><circle cx="5.800000000000001" cy="10.1" r="1.05" fill="none" stroke="#b6bac1" stroke-width="0.75"/></symbol><symbol id="b25" viewBox="0 0 8 12" width="8" height="12" overflow="visible"><circle cx="1.1" cy="1.1" r="1.25" fill="#000"/><circle cx="1.1" cy="5.6" r="1.05" fill="none" stroke="#b6bac1" stroke-width="0.75"/><circle cx="1.1" cy="10.1" r="1.05" fill="none" stroke="#b6bac1" stroke-width="0.75"/><circle cx="5.800000000000001" cy="1.1" r="1.25" fill="#000"/><circle cx="5.800000000000001" cy="5.6" r="1.25" fill="#000"/><circle cx="5.800000000000001" cy="10.1" r="1.05" fill="none" stroke="#b6bac1" stroke-width="0.75"/></symbol><symbol id="b26" viewBox="0 0 8 12" width="8" height="12" overflow="visible"><circle cx="1.1" cy="1.1" r="1.05" fill="none" stroke="#b6bac1" stroke-width="0.75"/><circle cx="1.1" cy="5.6" r="1.25" fill="#000"/><circle cx="1.1" cy="10.1" r="1.05" fill="none" stroke="#b6bac1" stroke-width="0.75"/><circle cx="5.800000000000001" cy="1.1" r="1.25" fill="#000"/><circle cx="5.800000000000001" cy="5.6" r="1.25" fill="#000"/><circle cx="5.800000000000001" cy="10.1" r="1.05" fill="none" stroke="#b6bac1" stroke-width="0.75"/></symbol><symbol id="b27" viewBox="0 0 8 12" width="8" height="12" overflow="visible"><circle cx="1.1" cy="1.1" r="1.25" fill="#000"/><circle cx="1.1" cy="5.6" r="1.25" fill="#000"/><circle cx="1.1" cy="10.1" r="1.05" fill="none" stroke="#b6bac1" stroke-width="0.75"/><circle cx="5.800000000000001" cy="1.1" r="1.25" fill="#000"/><circle cx="5.800000000000001" cy="5.6" r="1.25" fill="#000"/><circle cx="5.800000000000001" cy="10.1" r="1.05" fill="none" stroke="#b6bac1" stroke-width="0.75"/></symbol><symbol id="b28" viewBox="0 0 8 12" width="8" height="12" overflow="visible"><circle cx="1.1" cy="1.1" r="1.05" fill="none" stroke="#b6bac1" stroke-width="0.75"/><circle cx="1.1" cy="5.6" r="1.05" fill="none" stroke="#b6bac1" stroke-width="0.75"/><circle cx="1.1" cy="10.1" r="1.25" fill="#000"/><circle cx="5.800000000000001" cy="1.1" r="1.25" fill="#000"/><circle cx="5.800000000000001" cy="5.6" r="1.25" fill="#000"/><circle cx="5.800000000000001" cy="10.1" r="1.05" fill="none" stroke="#b6bac1" stroke-width="0.75"/></symbol><symbol id="b29" viewBox="0 0 8 12" width="8" height="12" overflow="visible"><circle cx="1.1" cy="1.1" r="1.25" fill="#000"/><circle cx="1.1" cy="5.6" r="1.05" fill="none" stroke="#b6bac1" stroke-width="0.75"/><circle cx="1.1" cy="10.1" r="1.25" fill="#000"/><circle cx="5.800000000000001" cy="1.1" r="1.25" fill="#000"/><circle cx="5.800000000000001" cy="5.6" r="1.25" fill="#000"/><circle cx="5.800000000000001" cy="10.1" r="1.05" fill="none" stroke="#b6bac1" stroke-width="0.75"/></symbol><symbol id="b30" viewBox="0 0 8 12" width="8" height="12" overflow="visible"><circle cx="1.1" cy="1.1" r="1.05" fill="none" stroke="#b6bac1" stroke-width="0.75"/><circle cx="1.1" cy="5.6" r="1.25" fill="#000"/><circle cx="1.1" cy="10.1" r="1.25" fill="#000"/><circle cx="5.800000000000001" cy="1.1" r="1.25" fill="#000"/><circle cx="5.800000000000001" cy="5.6" r="1.25" fill="#000"/><circle cx="5.800000000000001" cy="10.1" r="1.05" fill="none" stroke="#b6bac1" stroke-width="0.75"/></symbol><symbol id="b31" viewBox="0 0 8 12" width="8" height="12" overflow="visible"><circle cx="1.1" cy="1.1" r="1.25" fill="#000"/><circle cx="1.1" cy="5.6" r="1.25" fill="#000"/><circle cx="1.1" cy="10.1" r="1.25" fill="#000"/><circle cx="5.800000000000001" cy="1.1" r="1.25" fill="#000"/><circle cx="5.800000000000001" cy="5.6" r="1.25" fill="#000"/><circle cx="5.800000000000001" cy="10.1" r="1.05" fill="none" stroke="#b6bac1" stroke-width="0.75"/></symbol><symbol id="b32" viewBox="0 0 8 12" width="8" height="12" overflow="visible"><circle cx="1.1" cy="1.1" r="1.05" fill="none" stroke="#b6bac1" stroke-width="0.75"/><circle cx="1.1" cy="5.6" r="1.05" fill="none" stroke="#b6bac1" stroke-width="0.75"/><circle cx="1.1" cy="10.1" r="1.05" fill="none" stroke="#b6bac1" stroke-width="0.75"/><circle cx="5.800000000000001" cy="1.1" r="1.05" fill="none" stroke="#b6bac1" stroke-width="0.75"/><circle cx="5.800000000000001" cy="5.6" r="1.05" fill="none" stroke="#b6bac1" stroke-width="0.75"/><circle cx="5.800000000000001" cy="10.1" r="1.25" fill="#000"/></symbol><symbol id="b33" viewBox="0 0 8 12" width="8" height="12" overflow="visible"><circle cx="1.1" cy="1.1" r="1.25" fill="#000"/><circle cx="1.1" cy="5.6" r="1.05" fill="none" stroke="#b6bac1" stroke-width="0.75"/><circle cx="1.1" cy="10.1" r="1.05" fill="none" stroke="#b6bac1" stroke-width="0.75"/><circle cx="5.800000000000001" cy="1.1" r="1.05" fill="none" stroke="#b6bac1" stroke-width="0.75"/><circle cx="5.800000000000001" cy="5.6" r="1.05" fill="none" stroke="#b6bac1" stroke-width="0.75"/><circle cx="5.800000000000001" cy="10.1" r="1.25" fill="#000"/></symbol><symbol id="b34" viewBox="0 0 8 12" width="8" height="12" overflow="visible"><circle cx="1.1" cy="1.1" r="1.05" fill="none" stroke="#b6bac1" stroke-width="0.75"/><circle cx="1.1" cy="5.6" r="1.25" fill="#000"/><circle cx="1.1" cy="10.1" r="1.05" fill="none" stroke="#b6bac1" stroke-width="0.75"/><circle cx="5.800000000000001" cy="1.1" r="1.05" fill="none" stroke="#b6bac1" stroke-width="0.75"/><circle cx="5.800000000000001" cy="5.6" r="1.05" fill="none" stroke="#b6bac1" stroke-width="0.75"/><circle cx="5.800000000000001" cy="10.1" r="1.25" fill="#000"/></symbol><symbol id="b35" viewBox="0 0 8 12" width="8" height="12" overflow="visible"><circle cx="1.1" cy="1.1" r="1.25" fill="#000"/><circle cx="1.1" cy="5.6" r="1.25" fill="#000"/><circle cx="1.1" cy="10.1" r="1.05" fill="none" stroke="#b6bac1" stroke-width="0.75"/><circle cx="5.800000000000001" cy="1.1" r="1.05" fill="none" stroke="#b6bac1" stroke-width="0.75"/><circle cx="5.800000000000001" cy="5.6" r="1.05" fill="none" stroke="#b6bac1" stroke-width="0.75"/><circle cx="5.800000000000001" cy="10.1" r="1.25" fill="#000"/></symbol><symbol id="b36" viewBox="0 0 8 12" width="8" height="12" overflow="visible"><circle cx="1.1" cy="1.1" r="1.05" fill="none" stroke="#b6bac1" stroke-width="0.75"/><circle cx="1.1" cy="5.6" r="1.05" fill="none" stroke="#b6bac1" stroke-width="0.75"/><circle cx="1.1" cy="10.1" r="1.25" fill="#000"/><circle cx="5.800000000000001" cy="1.1" r="1.05" fill="none" stroke="#b6bac1" stroke-width="0.75"/><circle cx="5.800000000000001" cy="5.6" r="1.05" fill="none" stroke="#b6bac1" stroke-width="0.75"/><circle cx="5.800000000000001" cy="10.1" r="1.25" fill="#000"/></symbol><symbol id="b37" viewBox="0 0 8 12" width="8" height="12" overflow="visible"><circle cx="1.1" cy="1.1" r="1.25" fill="#000"/><circle cx="1.1" cy="5.6" r="1.05" fill="none" stroke="#b6bac1" stroke-width="0.75"/><circle cx="1.1" cy="10.1" r="1.25" fill="#000"/><circle cx="5.800000000000001" cy="1.1" r="1.05" fill="none" stroke="#b6bac1" stroke-width="0.75"/><circle cx="5.800000000000001" cy="5.6" r="1.05" fill="none" stroke="#b6bac1" stroke-width="0.75"/><circle cx="5.800000000000001" cy="10.1" r="1.25" fill="#000"/></symbol><symbol id="b38" viewBox="0 0 8 12" width="8" height="12" overflow="visible"><circle cx="1.1" cy="1.1" r="1.05" fill="none" stroke="#b6bac1" stroke-width="0.75"/><circle cx="1.1" cy="5.6" r="1.25" fill="#000"/><circle cx="1.1" cy="10.1" r="1.25" fill="#000"/><circle cx="5.800000000000001" cy="1.1" r="1.05" fill="none" stroke="#b6bac1" stroke-width="0.75"/><circle cx="5.800000000000001" cy="5.6" r="1.05" fill="none" stroke="#b6bac1" stroke-width="0.75"/><circle cx="5.800000000000001" cy="10.1" r="1.25" fill="#000"/></symbol><symbol id="b39" viewBox="0 0 8 12" width="8" height="12" overflow="visible"><circle cx="1.1" cy="1.1" r="1.25" fill="#000"/><circle cx="1.1" cy="5.6" r="1.25" fill="#000"/><circle cx="1.1" cy="10.1" r="1.25" fill="#000"/><circle cx="5.800000000000001" cy="1.1" r="1.05" fill="none" stroke="#b6bac1" stroke-width="0.75"/><circle cx="5.800000000000001" cy="5.6" r="1.05" fill="none" stroke="#b6bac1" stroke-width="0.75"/><circle cx="5.800000000000001" cy="10.1" r="1.25" fill="#000"/></symbol><symbol id="b40" viewBox="0 0 8 12" width="8" height="12" overflow="visible"><circle cx="1.1" cy="1.1" r="1.05" fill="none" stroke="#b6bac1" stroke-width="0.75"/><circle cx="1.1" cy="5.6" r="1.05" fill="none" stroke="#b6bac1" stroke-width="0.75"/><circle cx="1.1" cy="10.1" r="1.05" fill="none" stroke="#b6bac1" stroke-width="0.75"/><circle cx="5.800000000000001" cy="1.1" r="1.25" fill="#000"/><circle cx="5.800000000000001" cy="5.6" r="1.05" fill="none" stroke="#b6bac1" stroke-width="0.75"/><circle cx="5.800000000000001" cy="10.1" r="1.25" fill="#000"/></symbol><symbol id="b41" viewBox="0 0 8 12" width="8" height="12" overflow="visible"><circle cx="1.1" cy="1.1" r="1.25" fill="#000"/><circle cx="1.1" cy="5.6" r="1.05" fill="none" stroke="#b6bac1" stroke-width="0.75"/><circle cx="1.1" cy="10.1" r="1.05" fill="none" stroke="#b6bac1" stroke-width="0.75"/><circle cx="5.800000000000001" cy="1.1" r="1.25" fill="#000"/><circle cx="5.800000000000001" cy="5.6" r="1.05" fill="none" stroke="#b6bac1" stroke-width="0.75"/><circle cx="5.800000000000001" cy="10.1" r="1.25" fill="#000"/></symbol><symbol id="b42" viewBox="0 0 8 12" width="8" height="12" overflow="visible"><circle cx="1.1" cy="1.1" r="1.05" fill="none" stroke="#b6bac1" stroke-width="0.75"/><circle cx="1.1" cy="5.6" r="1.25" fill="#000"/><circle cx="1.1" cy="10.1" r="1.05" fill="none" stroke="#b6bac1" stroke-width="0.75"/><circle cx="5.800000000000001" cy="1.1" r="1.25" fill="#000"/><circle cx="5.800000000000001" cy="5.6" r="1.05" fill="none" stroke="#b6bac1" stroke-width="0.75"/><circle cx="5.800000000000001" cy="10.1" r="1.25" fill="#000"/></symbol><symbol id="b43" viewBox="0 0 8 12" width="8" height="12" overflow="visible"><circle cx="1.1" cy="1.1" r="1.25" fill="#000"/><circle cx="1.1" cy="5.6" r="1.25" fill="#000"/><circle cx="1.1" cy="10.1" r="1.05" fill="none" stroke="#b6bac1" stroke-width="0.75"/><circle cx="5.800000000000001" cy="1.1" r="1.25" fill="#000"/><circle cx="5.800000000000001" cy="5.6" r="1.05" fill="none" stroke="#b6bac1" stroke-width="0.75"/><circle cx="5.800000000000001" cy="10.1" r="1.25" fill="#000"/></symbol><symbol id="b44" viewBox="0 0 8 12" width="8" height="12" overflow="visible"><circle cx="1.1" cy="1.1" r="1.05" fill="none" stroke="#b6bac1" stroke-width="0.75"/><circle cx="1.1" cy="5.6" r="1.05" fill="none" stroke="#b6bac1" stroke-width="0.75"/><circle cx="1.1" cy="10.1" r="1.25" fill="#000"/><circle cx="5.800000000000001" cy="1.1" r="1.25" fill="#000"/><circle cx="5.800000000000001" cy="5.6" r="1.05" fill="none" stroke="#b6bac1" stroke-width="0.75"/><circle cx="5.800000000000001" cy="10.1" r="1.25" fill="#000"/></symbol><symbol id="b45" viewBox="0 0 8 12" width="8" height="12" overflow="visible"><circle cx="1.1" cy="1.1" r="1.25" fill="#000"/><circle cx="1.1" cy="5.6" r="1.05" fill="none" stroke="#b6bac1" stroke-width="0.75"/><circle cx="1.1" cy="10.1" r="1.25" fill="#000"/><circle cx="5.800000000000001" cy="1.1" r="1.25" fill="#000"/><circle cx="5.800000000000001" cy="5.6" r="1.05" fill="none" stroke="#b6bac1" stroke-width="0.75"/><circle cx="5.800000000000001" cy="10.1" r="1.25" fill="#000"/></symbol><symbol id="b46" viewBox="0 0 8 12" width="8" height="12" overflow="visible"><circle cx="1.1" cy="1.1" r="1.05" fill="none" stroke="#b6bac1" stroke-width="0.75"/><circle cx="1.1" cy="5.6" r="1.25" fill="#000"/><circle cx="1.1" cy="10.1" r="1.25" fill="#000"/><circle cx="5.800000000000001" cy="1.1" r="1.25" fill="#000"/><circle cx="5.800000000000001" cy="5.6" r="1.05" fill="none" stroke="#b6bac1" stroke-width="0.75"/><circle cx="5.800000000000001" cy="10.1" r="1.25" fill="#000"/></symbol><symbol id="b47" viewBox="0 0 8 12" width="8" height="12" overflow="visible"><circle cx="1.1" cy="1.1" r="1.25" fill="#000"/><circle cx="1.1" cy="5.6" r="1.25" fill="#000"/><circle cx="1.1" cy="10.1" r="1.25" fill="#000"/><circle cx="5.800000000000001" cy="1.1" r="1.25" fill="#000"/><circle cx="5.800000000000001" cy="5.6" r="1.05" fill="none" stroke="#b6bac1" stroke-width="0.75"/><circle cx="5.800000000000001" cy="10.1" r="1.25" fill="#000"/></symbol><symbol id="b48" viewBox="0 0 8 12" width="8" height="12" overflow="visible"><circle cx="1.1" cy="1.1" r="1.05" fill="none" stroke="#b6bac1" stroke-width="0.75"/><circle cx="1.1" cy="5.6" r="1.05" fill="none" stroke="#b6bac1" stroke-width="0.75"/><circle cx="1.1" cy="10.1" r="1.05" fill="none" stroke="#b6bac1" stroke-width="0.75"/><circle cx="5.800000000000001" cy="1.1" r="1.05" fill="none" stroke="#b6bac1" stroke-width="0.75"/><circle cx="5.800000000000001" cy="5.6" r="1.25" fill="#000"/><circle cx="5.800000000000001" cy="10.1" r="1.25" fill="#000"/></symbol><symbol id="b49" viewBox="0 0 8 12" width="8" height="12" overflow="visible"><circle cx="1.1" cy="1.1" r="1.25" fill="#000"/><circle cx="1.1" cy="5.6" r="1.05" fill="none" stroke="#b6bac1" stroke-width="0.75"/><circle cx="1.1" cy="10.1" r="1.05" fill="none" stroke="#b6bac1" stroke-width="0.75"/><circle cx="5.800000000000001" cy="1.1" r="1.05" fill="none" stroke="#b6bac1" stroke-width="0.75"/><circle cx="5.800000000000001" cy="5.6" r="1.25" fill="#000"/><circle cx="5.800000000000001" cy="10.1" r="1.25" fill="#000"/></symbol><symbol id="b50" viewBox="0 0 8 12" width="8" height="12" overflow="visible"><circle cx="1.1" cy="1.1" r="1.05" fill="none" stroke="#b6bac1" stroke-width="0.75"/><circle cx="1.1" cy="5.6" r="1.25" fill="#000"/><circle cx="1.1" cy="10.1" r="1.05" fill="none" stroke="#b6bac1" stroke-width="0.75"/><circle cx="5.800000000000001" cy="1.1" r="1.05" fill="none" stroke="#b6bac1" stroke-width="0.75"/><circle cx="5.800000000000001" cy="5.6" r="1.25" fill="#000"/><circle cx="5.800000000000001" cy="10.1" r="1.25" fill="#000"/></symbol><symbol id="b51" viewBox="0 0 8 12" width="8" height="12" overflow="visible"><circle cx="1.1" cy="1.1" r="1.25" fill="#000"/><circle cx="1.1" cy="5.6" r="1.25" fill="#000"/><circle cx="1.1" cy="10.1" r="1.05" fill="none" stroke="#b6bac1" stroke-width="0.75"/><circle cx="5.800000000000001" cy="1.1" r="1.05" fill="none" stroke="#b6bac1" stroke-width="0.75"/><circle cx="5.800000000000001" cy="5.6" r="1.25" fill="#000"/><circle cx="5.800000000000001" cy="10.1" r="1.25" fill="#000"/></symbol><symbol id="b52" viewBox="0 0 8 12" width="8" height="12" overflow="visible"><circle cx="1.1" cy="1.1" r="1.05" fill="none" stroke="#b6bac1" stroke-width="0.75"/><circle cx="1.1" cy="5.6" r="1.05" fill="none" stroke="#b6bac1" stroke-width="0.75"/><circle cx="1.1" cy="10.1" r="1.25" fill="#000"/><circle cx="5.800000000000001" cy="1.1" r="1.05" fill="none" stroke="#b6bac1" stroke-width="0.75"/><circle cx="5.800000000000001" cy="5.6" r="1.25" fill="#000"/><circle cx="5.800000000000001" cy="10.1" r="1.25" fill="#000"/></symbol><symbol id="b53" viewBox="0 0 8 12" width="8" height="12" overflow="visible"><circle cx="1.1" cy="1.1" r="1.25" fill="#000"/><circle cx="1.1" cy="5.6" r="1.05" fill="none" stroke="#b6bac1" stroke-width="0.75"/><circle cx="1.1" cy="10.1" r="1.25" fill="#000"/><circle cx="5.800000000000001" cy="1.1" r="1.05" fill="none" stroke="#b6bac1" stroke-width="0.75"/><circle cx="5.800000000000001" cy="5.6" r="1.25" fill="#000"/><circle cx="5.800000000000001" cy="10.1" r="1.25" fill="#000"/></symbol><symbol id="b54" viewBox="0 0 8 12" width="8" height="12" overflow="visible"><circle cx="1.1" cy="1.1" r="1.05" fill="none" stroke="#b6bac1" stroke-width="0.75"/><circle cx="1.1" cy="5.6" r="1.25" fill="#000"/><circle cx="1.1" cy="10.1" r="1.25" fill="#000"/><circle cx="5.800000000000001" cy="1.1" r="1.05" fill="none" stroke="#b6bac1" stroke-width="0.75"/><circle cx="5.800000000000001" cy="5.6" r="1.25" fill="#000"/><circle cx="5.800000000000001" cy="10.1" r="1.25" fill="#000"/></symbol><symbol id="b55" viewBox="0 0 8 12" width="8" height="12" overflow="visible"><circle cx="1.1" cy="1.1" r="1.25" fill="#000"/><circle cx="1.1" cy="5.6" r="1.25" fill="#000"/><circle cx="1.1" cy="10.1" r="1.25" fill="#000"/><circle cx="5.800000000000001" cy="1.1" r="1.05" fill="none" stroke="#b6bac1" stroke-width="0.75"/><circle cx="5.800000000000001" cy="5.6" r="1.25" fill="#000"/><circle cx="5.800000000000001" cy="10.1" r="1.25" fill="#000"/></symbol><symbol id="b56" viewBox="0 0 8 12" width="8" height="12" overflow="visible"><circle cx="1.1" cy="1.1" r="1.05" fill="none" stroke="#b6bac1" stroke-width="0.75"/><circle cx="1.1" cy="5.6" r="1.05" fill="none" stroke="#b6bac1" stroke-width="0.75"/><circle cx="1.1" cy="10.1" r="1.05" fill="none" stroke="#b6bac1" stroke-width="0.75"/><circle cx="5.800000000000001" cy="1.1" r="1.25" fill="#000"/><circle cx="5.800000000000001" cy="5.6" r="1.25" fill="#000"/><circle cx="5.800000000000001" cy="10.1" r="1.25" fill="#000"/></symbol><symbol id="b57" viewBox="0 0 8 12" width="8" height="12" overflow="visible"><circle cx="1.1" cy="1.1" r="1.25" fill="#000"/><circle cx="1.1" cy="5.6" r="1.05" fill="none" stroke="#b6bac1" stroke-width="0.75"/><circle cx="1.1" cy="10.1" r="1.05" fill="none" stroke="#b6bac1" stroke-width="0.75"/><circle cx="5.800000000000001" cy="1.1" r="1.25" fill="#000"/><circle cx="5.800000000000001" cy="5.6" r="1.25" fill="#000"/><circle cx="5.800000000000001" cy="10.1" r="1.25" fill="#000"/></symbol><symbol id="b58" viewBox="0 0 8 12" width="8" height="12" overflow="visible"><circle cx="1.1" cy="1.1" r="1.05" fill="none" stroke="#b6bac1" stroke-width="0.75"/><circle cx="1.1" cy="5.6" r="1.25" fill="#000"/><circle cx="1.1" cy="10.1" r="1.05" fill="none" stroke="#b6bac1" stroke-width="0.75"/><circle cx="5.800000000000001" cy="1.1" r="1.25" fill="#000"/><circle cx="5.800000000000001" cy="5.6" r="1.25" fill="#000"/><circle cx="5.800000000000001" cy="10.1" r="1.25" fill="#000"/></symbol><symbol id="b59" viewBox="0 0 8 12" width="8" height="12" overflow="visible"><circle cx="1.1" cy="1.1" r="1.25" fill="#000"/><circle cx="1.1" cy="5.6" r="1.25" fill="#000"/><circle cx="1.1" cy="10.1" r="1.05" fill="none" stroke="#b6bac1" stroke-width="0.75"/><circle cx="5.800000000000001" cy="1.1" r="1.25" fill="#000"/><circle cx="5.800000000000001" cy="5.6" r="1.25" fill="#000"/><circle cx="5.800000000000001" cy="10.1" r="1.25" fill="#000"/></symbol><symbol id="b60" viewBox="0 0 8 12" width="8" height="12" overflow="visible"><circle cx="1.1" cy="1.1" r="1.05" fill="none" stroke="#b6bac1" stroke-width="0.75"/><circle cx="1.1" cy="5.6" r="1.05" fill="none" stroke="#b6bac1" stroke-width="0.75"/><circle cx="1.1" cy="10.1" r="1.25" fill="#000"/><circle cx="5.800000000000001" cy="1.1" r="1.25" fill="#000"/><circle cx="5.800000000000001" cy="5.6" r="1.25" fill="#000"/><circle cx="5.800000000000001" cy="10.1" r="1.25" fill="#000"/></symbol><symbol id="b61" viewBox="0 0 8 12" width="8" height="12" overflow="visible"><circle cx="1.1" cy="1.1" r="1.25" fill="#000"/><circle cx="1.1" cy="5.6" r="1.05" fill="none" stroke="#b6bac1" stroke-width="0.75"/><circle cx="1.1" cy="10.1" r="1.25" fill="#000"/><circle cx="5.800000000000001" cy="1.1" r="1.25" fill="#000"/><circle cx="5.800000000000001" cy="5.6" r="1.25" fill="#000"/><circle cx="5.800000000000001" cy="10.1" r="1.25" fill="#000"/></symbol><symbol id="b62" viewBox="0 0 8 12" width="8" height="12" overflow="visible"><circle cx="1.1" cy="1.1" r="1.05" fill="none" stroke="#b6bac1" stroke-width="0.75"/><circle cx="1.1" cy="5.6" r="1.25" fill="#000"/><circle cx="1.1" cy="10.1" r="1.25" fill="#000"/><circle cx="5.800000000000001" cy="1.1" r="1.25" fill="#000"/><circle cx="5.800000000000001" cy="5.6" r="1.25" fill="#000"/><circle cx="5.800000000000001" cy="10.1" r="1.25" fill="#000"/></symbol><symbol id="b63" viewBox="0 0 8 12" width="8" height="12" overflow="visible"><circle cx="1.1" cy="1.1" r="1.25" fill="#000"/><circle cx="1.1" cy="5.6" r="1.25" fill="#000"/><circle cx="1.1" cy="10.1" r="1.25" fill="#000"/><circle cx="5.800000000000001" cy="1.1" r="1.25" fill="#000"/><circle cx="5.800000000000001" cy="5.6" r="1.25" fill="#000"/><circle cx="5.800000000000001" cy="10.1" r="1.25" fill="#000"/></symbol></defs><use href="#b26" x="14.00" y="19.70"/><use href="#b39" x="26.47" y="19.70"/><use href="#b32" x="38.94" y="19.70"/><use href="#b59" x="51.41" y="19.70"/><use href="#b32" x="63.88" y="19.70"/><use href="#b21" x="76.35" y="19.70"/><use href="#b0" x="88.82" y="19.70"/><use href="#b8" x="101.29" y="19.70"/><use href="#b63" x="113.76" y="19.70"/><use href="#b8" x="126.23" y="19.70"/><use href="#b37" x="138.70" y="19.70"/><use href="#b0" x="151.17" y="19.70"/><use href="#b40" x="163.64" y="19.70"/><use href="#b29" x="176.11" y="19.70"/><use href="#b60" x="188.58" y="19.70"/><use href="#b3" x="201.05" y="19.70"/><use href="#b3" x="213.52" y="19.70"/><use href="#b17" x="225.99" y="19.70"/><use href="#b36" x="238.46" y="19.70"/><use href="#b60" x="250.93" y="19.70"/><use href="#b1" x="263.40" y="19.70"/><use href="#b17" x="275.87" y="19.70"/><use href="#b1" x="288.34" y="19.70"/><use href="#b1" x="300.81" y="19.70"/><use href="#b0" x="313.28" y="19.70"/><use href="#b26" x="325.75" y="19.70"/><use href="#b37" x="338.22" y="19.70"/><use href="#b19" x="14.00" y="78.90"/><use href="#b47" x="26.47" y="78.90"/><use href="#b60" x="38.94" y="78.90"/><use href="#b3" x="51.41" y="78.90"/><use href="#b26" x="63.88" y="78.90"/><use href="#b3" x="76.35" y="78.90"/><use href="#b17" x="88.82" y="78.90"/><use href="#b0" x="101.29" y="78.90"/><use href="#b52" x="113.76" y="78.90"/><use href="#b32" x="126.23" y="78.90"/><use href="#b19" x="138.70" y="78.90"/><use href="#b50" x="151.17" y="78.90"/><use href="#b36" x="163.64" y="78.90"/><use href="#b32" x="176.11" y="78.90"/><use href="#b42" x="188.58" y="78.90"/><use href="#b19" x="201.05" y="78.90"/><use href="#b19" x="213.52" y="78.90"/><use href="#b42" x="225.99" y="78.90"/><use href="#b14" x="238.46" y="78.90"/><use href="#b3" x="250.93" y="78.90"/><use href="#b0" x="263.40" y="78.90"/><use href="#b48" x="275.87" y="78.90"/><use href="#b35" x="288.34" y="78.90"/><use href="#b54" x="300.81" y="78.90"/><use href="#b10" x="313.28" y="78.90"/><use href="#b3" x="325.75" y="78.90"/><use href="#b8" x="338.22" y="78.90"/><use href="#b59" x="350.69" y="78.90"/><use href="#b40" x="363.16" y="78.90"/><use href="#b31" x="375.63" y="78.90"/><use href="#b10" x="388.10" y="78.90"/><use href="#b23" x="400.57" y="78.90"/><use href="#b26" x="14.00" y="108.50"/><use href="#b61" x="26.47" y="108.50"/><use href="#b52" x="38.94" y="108.50"/><use href="#b32" x="51.41" y="108.50"/><use href="#b37" x="63.88" y="108.50"/><use href="#b50" x="76.35" y="108.50"/><use href="#b0" x="88.82" y="108.50"/><use href="#b48" x="101.29" y="108.50"/><use href="#b35" x="113.76" y="108.50"/><use href="#b34" x="126.23" y="108.50"/><use href="#b43" x="138.70" y="108.50"/><use href="#b40" x="151.17" y="108.50"/><use href="#b0" x="163.64" y="108.50"/><use href="#b17" x="176.11" y="108.50"/><use href="#b37" x="188.58" y="108.50"/><use href="#b40" x="201.05" y="108.50"/><use href="#b21" x="213.52" y="108.50"/><use href="#b3" x="225.99" y="108.50"/><use href="#b0" x="238.46" y="108.50"/><use href="#b8" x="250.93" y="108.50"/><use href="#b63" x="263.40" y="108.50"/><use href="#b8" x="275.87" y="108.50"/><use href="#b37" x="288.34" y="108.50"/><use href="#b26" x="14.00" y="167.70"/><use href="#b49" x="26.47" y="167.70"/><use href="#b1" x="38.94" y="167.70"/><use href="#b32" x="51.41" y="167.70"/><use href="#b31" x="63.88" y="167.70"/><use href="#b40" x="76.35" y="167.70"/><use href="#b57" x="88.82" y="167.70"/><use href="#b31" x="101.29" y="167.70"/><use href="#b0" x="113.76" y="167.70"/><use href="#b48" x="126.23" y="167.70"/><use href="#b35" x="138.70" y="167.70"/><use href="#b54" x="151.17" y="167.70"/><use href="#b14" x="163.64" y="167.70"/><use href="#b3" x="176.11" y="167.70"/><use href="#b35" x="188.58" y="167.70"/><use href="#b21" x="201.05" y="167.70"/><use href="#b10" x="213.52" y="167.70"/><use href="#b21" x="225.99" y="167.70"/><use href="#b14" x="238.46" y="167.70"/><use href="#b16" x="250.93" y="167.70"/><use href="#b46" x="263.40" y="167.70"/><use href="#b0" x="275.87" y="167.70"/><use href="#b24" x="288.34" y="167.70"/><use href="#b37" x="300.81" y="167.70"/><use href="#b41" x="313.28" y="167.70"/><use href="#b26" x="325.75" y="167.70"/><use href="#b18" x="338.22" y="167.70"/><use href="#b0" x="350.69" y="167.70"/><use href="#b41" x="363.16" y="167.70"/><use href="#b17" x="375.63" y="167.70"/><use href="#b54" x="388.10" y="167.70"/><use href="#b0" x="400.57" y="167.70"/><use href="#b38" x="14.00" y="197.30"/><use href="#b4" x="26.47" y="197.30"/><use href="#b12" x="38.94" y="197.30"/><use href="#b24" x="51.41" y="197.30"/><use href="#b21" x="63.88" y="197.30"/><use href="#b32" x="76.35" y="197.30"/><use href="#b52" x="88.82" y="197.30"/><use href="#b48" x="101.29" y="197.30"/><use href="#b35" x="113.76" y="197.30"/><use href="#b54" x="126.23" y="197.30"/><use href="#b14" x="138.70" y="197.30"/><use href="#b3" x="151.17" y="197.30"/><use href="#b40" x="163.64" y="197.30"/><use href="#b16" x="176.11" y="197.30"/><use href="#b46" x="188.58" y="197.30"/><use href="#b0" x="201.05" y="197.30"/><use href="#b24" x="213.52" y="197.30"/><use href="#b2" x="225.99" y="197.30"/><use href="#b8" x="238.46" y="197.30"/><use href="#b47" x="250.93" y="197.30"/><use href="#b26" x="263.40" y="197.30"/><use href="#b8" x="275.87" y="197.30"/><use href="#b37" x="288.34" y="197.30"/><use href="#b40" x="300.81" y="197.30"/><use href="#b0" x="313.28" y="197.30"/><use href="#b16" x="325.75" y="197.30"/><use href="#b38" x="338.22" y="197.30"/><use href="#b60" x="350.69" y="197.30"/><use href="#b3" x="363.16" y="197.30"/><use href="#b26" x="375.63" y="197.30"/><use href="#b3" x="388.10" y="197.30"/><use href="#b17" x="400.57" y="197.30"/><use href="#b0" x="14.00" y="226.90"/><use href="#b52" x="26.47" y="226.90"/><use href="#b32" x="38.94" y="226.90"/><use href="#b19" x="51.41" y="226.90"/><use href="#b50" x="63.88" y="226.90"/><use href="#b36" x="76.35" y="226.90"/><use href="#b32" x="88.82" y="226.90"/><use href="#b42" x="101.29" y="226.90"/><use href="#b19" x="113.76" y="226.90"/><use href="#b19" x="126.23" y="226.90"/><use href="#b42" x="138.70" y="226.90"/><use href="#b14" x="151.17" y="226.90"/><use href="#b3" x="163.64" y="226.90"/><use href="#b0" x="176.11" y="226.90"/><use href="#b48" x="188.58" y="226.90"/><use href="#b35" x="201.05" y="226.90"/><use href="#b54" x="213.52" y="226.90"/><use href="#b14" x="225.99" y="226.90"/><use href="#b3" x="238.46" y="226.90"/><use href="#b8" x="250.93" y="226.90"/><use href="#b59" x="263.40" y="226.90"/><use href="#b40" x="275.87" y="226.90"/><use href="#b31" x="288.34" y="226.90"/><use href="#b10" x="300.81" y="226.90"/><use href="#b23" x="313.28" y="226.90"/><use href="#b26" x="325.75" y="226.90"/><use href="#b61" x="338.22" y="226.90"/><use href="#b52" x="350.69" y="226.90"/><use href="#b2" x="363.16" y="226.90"/><use href="#b16" x="375.63" y="226.90"/><use href="#b46" x="388.10" y="226.90"/><use href="#b0" x="400.57" y="226.90"/><use href="#b8" x="14.00" y="256.50"/><use href="#b23" x="26.47" y="256.50"/><use href="#b48" x="38.94" y="256.50"/><use href="#b61" x="51.41" y="256.50"/><use href="#b26" x="63.88" y="256.50"/><use href="#b35" x="76.35" y="256.50"/><use href="#b49" x="88.82" y="256.50"/><use href="#b0" x="101.29" y="256.50"/><use href="#b48" x="113.76" y="256.50"/><use href="#b35" x="126.23" y="256.50"/><use href="#b34" x="138.70" y="256.50"/><use href="#b43" x="151.17" y="256.50"/><use href="#b40" x="163.64" y="256.50"/><use href="#b16" x="176.11" y="256.50"/><use href="#b46" x="188.58" y="256.50"/><use href="#b0" x="201.05" y="256.50"/><use href="#b17" x="213.52" y="256.50"/><use href="#b37" x="225.99" y="256.50"/><use href="#b40" x="238.46" y="256.50"/><use href="#b21" x="250.93" y="256.50"/><use href="#b3" x="263.40" y="256.50"/><use href="#b26" x="275.87" y="256.50"/><use href="#b35" x="288.34" y="256.50"/><use href="#b37" x="300.81" y="256.50"/><use href="#b9" x="313.28" y="256.50"/><use href="#b21" x="325.75" y="256.50"/><use href="#b0" x="338.22" y="256.50"/><use href="#b17" x="350.69" y="256.50"/><use href="#b18" x="363.16" y="256.50"/><use href="#b52" x="375.63" y="256.50"/><use href="#b53" x="388.10" y="256.50"/><use href="#b0" x="400.57" y="256.50"/><use href="#b48" x="14.00" y="286.10"/><use href="#b35" x="26.47" y="286.10"/><use href="#b34" x="38.94" y="286.10"/><use href="#b49" x="51.41" y="286.10"/><use href="#b0" x="63.88" y="286.10"/><use href="#b24" x="76.35" y="286.10"/><use href="#b16" x="88.82" y="286.10"/><use href="#b35" x="101.29" y="286.10"/><use href="#b3" x="113.76" y="286.10"/><use href="#b9" x="126.23" y="286.10"/><use href="#b21" x="138.70" y="286.10"/><use href="#b10" x="151.17" y="286.10"/><use href="#b50" x="163.64" y="286.10"/><use href="#b60" x="14.00" y="345.30"/><use href="#b3" x="26.47" y="345.30"/><use href="#b26" x="38.94" y="345.30"/><use href="#b3" x="51.41" y="345.30"/><use href="#b17" x="63.88" y="345.30"/><use href="#b0" x="76.35" y="345.30"/><use href="#b9" x="88.82" y="345.30"/><use href="#b33" x="101.29" y="345.30"/><use href="#b0" x="113.76" y="345.30"/><use href="#b60" x="126.23" y="345.30"/><use href="#b19" x="138.70" y="345.30"/><use href="#b15" x="151.17" y="345.30"/><use href="#b2" x="163.64" y="345.30"/><use href="#b0" x="176.11" y="345.30"/><use href="#b60" x="188.58" y="345.30"/><use href="#b3" x="201.05" y="345.30"/><use href="#b17" x="213.52" y="345.30"/><use href="#b21" x="225.99" y="345.30"/><use href="#b2" x="238.46" y="345.30"/><use href="#b26" x="14.00" y="404.50"/><use href="#b39" x="26.47" y="404.50"/><use href="#b0" x="38.94" y="404.50"/><use href="#b32" x="51.41" y="404.50"/><use href="#b59" x="63.88" y="404.50"/><use href="#b0" x="76.35" y="404.50"/><use href="#b32" x="88.82" y="404.50"/><use href="#b21" x="101.29" y="404.50"/><use href="#b0" x="113.76" y="404.50"/><use href="#b40" x="126.23" y="404.50"/><use href="#b54" x="138.70" y="404.50"/><use href="#b0" x="151.17" y="404.50"/><use href="#b40" x="163.64" y="404.50"/><use href="#b54" x="176.11" y="404.50"/><use href="#b60" x="14.00" y="463.70"/><use href="#b1" x="26.47" y="463.70"/><use href="#b0" x="38.94" y="463.70"/><use href="#b10" x="51.41" y="463.70"/><use href="#b23" x="63.88" y="463.70"/><use href="#b26" x="76.35" y="463.70"/><use href="#b61" x="88.82" y="463.70"/><use href="#b8" x="101.29" y="463.70"/><use href="#b23" x="113.76" y="463.70"/><use href="#b44" x="126.23" y="463.70"/><use href="#b16" x="14.00" y="522.90"/><use href="#b49" x="26.47" y="522.90"/><use href="#b0" x="38.94" y="522.90"/><use href="#b7" x="51.41" y="522.90"/><use href="#b14" x="63.88" y="522.90"/><use href="#b3" x="76.35" y="522.90"/><use href="#b17" x="88.82" y="522.90"/><use href="#b45" x="101.29" y="522.90"/><use href="#b25" x="113.76" y="522.90"/><use href="#b44" x="126.23" y="522.90"/><use href="#b8" x="14.00" y="582.10"/><use href="#b63" x="26.47" y="582.10"/><use href="#b0" x="38.94" y="582.10"/><use href="#b26" x="51.41" y="582.10"/><use href="#b49" x="63.88" y="582.10"/><use href="#b1" x="76.35" y="582.10"/><use href="#b32" x="88.82" y="582.10"/><use href="#b31" x="101.29" y="582.10"/><use href="#b40" x="113.76" y="582.10"/><use href="#b57" x="126.23" y="582.10"/><use href="#b31" x="138.70" y="582.10"/><use href="#b0" x="151.17" y="582.10"/><use href="#b20" x="163.64" y="582.10"/><use href="#b35" x="176.11" y="582.10"/><use href="#b38" x="188.58" y="582.10"/><use href="#b54" x="201.05" y="582.10"/><use href="#b0" x="213.52" y="582.10"/><use href="#b26" x="225.99" y="582.10"/><use href="#b35" x="238.46" y="582.10"/><use href="#b61" x="250.93" y="582.10"/><use href="#b0" x="263.40" y="582.10"/><use href="#b9" x="275.87" y="582.10"/><use href="#b4" x="288.34" y="582.10"/><use href="#b45" x="300.81" y="582.10"/><use href="#b33" x="313.28" y="582.10"/><use href="#b0" x="325.75" y="582.10"/><use href="#b33" x="338.22" y="582.10"/><use href="#b58" x="350.69" y="582.10"/><use href="#b23" x="363.16" y="582.10"/><use href="#b56" x="375.63" y="582.10"/><use href="#b30" x="388.10" y="582.10"/><use href="#b15" x="400.57" y="582.10"/><use href="#b8" x="14.00" y="611.70"/><use href="#b0" x="26.47" y="611.70"/><use href="#b0" x="38.94" y="611.70"/><use href="#b51" x="51.41" y="611.70"/><use href="#b0" x="63.88" y="611.70"/><use href="#b55" x="76.35" y="611.70"/><use href="#b10" x="88.82" y="611.70"/><use href="#b14" x="101.29" y="611.70"/><use href="#b3" x="113.76" y="611.70"/><use href="#b58" x="126.23" y="611.70"/><use href="#b1" x="138.70" y="611.70"/><use href="#b31" x="151.17" y="611.70"/><use href="#b16" x="163.64" y="611.70"/><use href="#b40" x="176.11" y="611.70"/><use href="#b38" x="188.58" y="611.70"/><use href="#b9" x="201.05" y="611.70"/><use href="#b13" x="213.52" y="611.70"/><use href="#b48" x="225.99" y="611.70"/><use href="#b29" x="238.46" y="611.70"/><use href="#b0" x="250.93" y="611.70"/><use href="#b26" x="263.40" y="611.70"/><use href="#b8" x="275.87" y="611.70"/><use href="#b13" x="288.34" y="611.70"/><use href="#b0" x="300.81" y="611.70"/><use href="#b0" x="313.28" y="611.70"/><use href="#b49" x="325.75" y="611.70"/><use href="#b7" x="338.22" y="611.70"/><use href="#b36" x="350.69" y="611.70"/><use href="#b17" x="363.16" y="611.70"/><use href="#b23" x="375.63" y="611.70"/><use href="#b19" x="388.10" y="611.70"/><use href="#b46" x="400.57" y="611.70"/></svg><div class="t" style="left:980.5px;top:869.23px;font-size:11.3px;color:#9ca3af;font-weight:400;letter-spacing:0.013px;">F/D/S (1/2/3 dots), J/K/L (4/5/6 dots) for braille | Space: empty | Enter: newline</div><div class="a" style="left:1799.3px;top:218.5px;width:88.29999999999995px;height:641.5px;background:#f9fafb;border:1px solid #e5e7eb;border-radius:8px;box-sizing:border-box"></div><div class="t" style="left:1821.4px;top:228.26px;font-size:9.5px;color:#6b7280;font-weight:400;">Click input</div><div class="a" style="left:1823.0px;top:247.8px;width:18.5px;height:18.5px;background:#e5e7eb;border:1px solid #d1d5db;border-radius:50%;box-sizing:border-box"></div><div class="a" style="left:1845.6px;top:247.8px;width:18.5px;height:18.5px;background:#e5e7eb;border:1px solid #d1d5db;border-radius:50%;box-sizing:border-box"></div><div class="a" style="left:1823.0px;top:269.5px;width:18.5px;height:18.5px;background:#e5e7eb;border:1px solid #d1d5db;border-radius:50%;box-sizing:border-box"></div><div class="a" style="left:1845.6px;top:269.5px;width:18.5px;height:18.5px;background:#e5e7eb;border:1px solid #d1d5db;border-radius:50%;box-sizing:border-box"></div><div class="a" style="left:1823.0px;top:291.2px;width:18.5px;height:18.5px;background:#e5e7eb;border:1px solid #d1d5db;border-radius:50%;box-sizing:border-box"></div><div class="a" style="left:1845.6px;top:291.2px;width:18.5px;height:18.5px;background:#e5e7eb;border:1px solid #d1d5db;border-radius:50%;box-sizing:border-box"></div><div class="a" style="left:1827.3px;top:316.6px;width:32.200000000000045px;height:37.799999999999955px;background:#fff;border:1px solid #e5e7eb;border-radius:4px;box-sizing:border-box"></div><svg class="a" style="left:1838.5px;top:326.3px" width="12" height="15"><circle cx="2" cy="2.0" r="1.5" fill="none" stroke="#b8bcc4" stroke-width="0.9"/><circle cx="8" cy="2.0" r="1.5" fill="none" stroke="#b8bcc4" stroke-width="0.9"/><circle cx="2" cy="7.1" r="1.5" fill="none" stroke="#b8bcc4" stroke-width="0.9"/><circle cx="8" cy="7.1" r="1.5" fill="none" stroke="#b8bcc4" stroke-width="0.9"/><circle cx="2" cy="12.2" r="1.5" fill="none" stroke="#b8bcc4" stroke-width="0.9"/><circle cx="8" cy="12.2" r="1.5" fill="none" stroke="#b8bcc4" stroke-width="0.9"/></svg><div class="a" style="left:1807px;top:362.4px;width:71.29999999999995px;height:28.600000000000023px;background:#f9fafb;border:1px solid #e5e7eb;border-radius:6px;box-sizing:border-box"></div><div class="t" style="left:1833px;top:371.69px;font-size:11px;color:#6b7280;font-weight:400;">Add</div><div class="t" style="left:1818px;top:407.19px;font-size:11px;color:#6b7280;font-weight:400;">Clear dots</div><div class="a" style="left:331px;top:750px;width:1251px;height:121.5px;background:rgba(198,198,199,0.82);border-radius:40px"></div><div class="t" style="left:369px;top:765.78px;font-size:37px;color:#000;font-weight:400;letter-spacing:1.081px;">Braille Edit allows editors to review and modify braille cells directly.</div><div class="t" style="left:368px;top:813.39px;font-size:39px;color:#000;font-weight:400;transform:scaleX(0.864);transform-origin:0 0;word-spacing:1.5px">점자 편집 기능을 통해 점자 셀을 직접 확인하고 수정할 수 있습니다.</div>
</body></html>
